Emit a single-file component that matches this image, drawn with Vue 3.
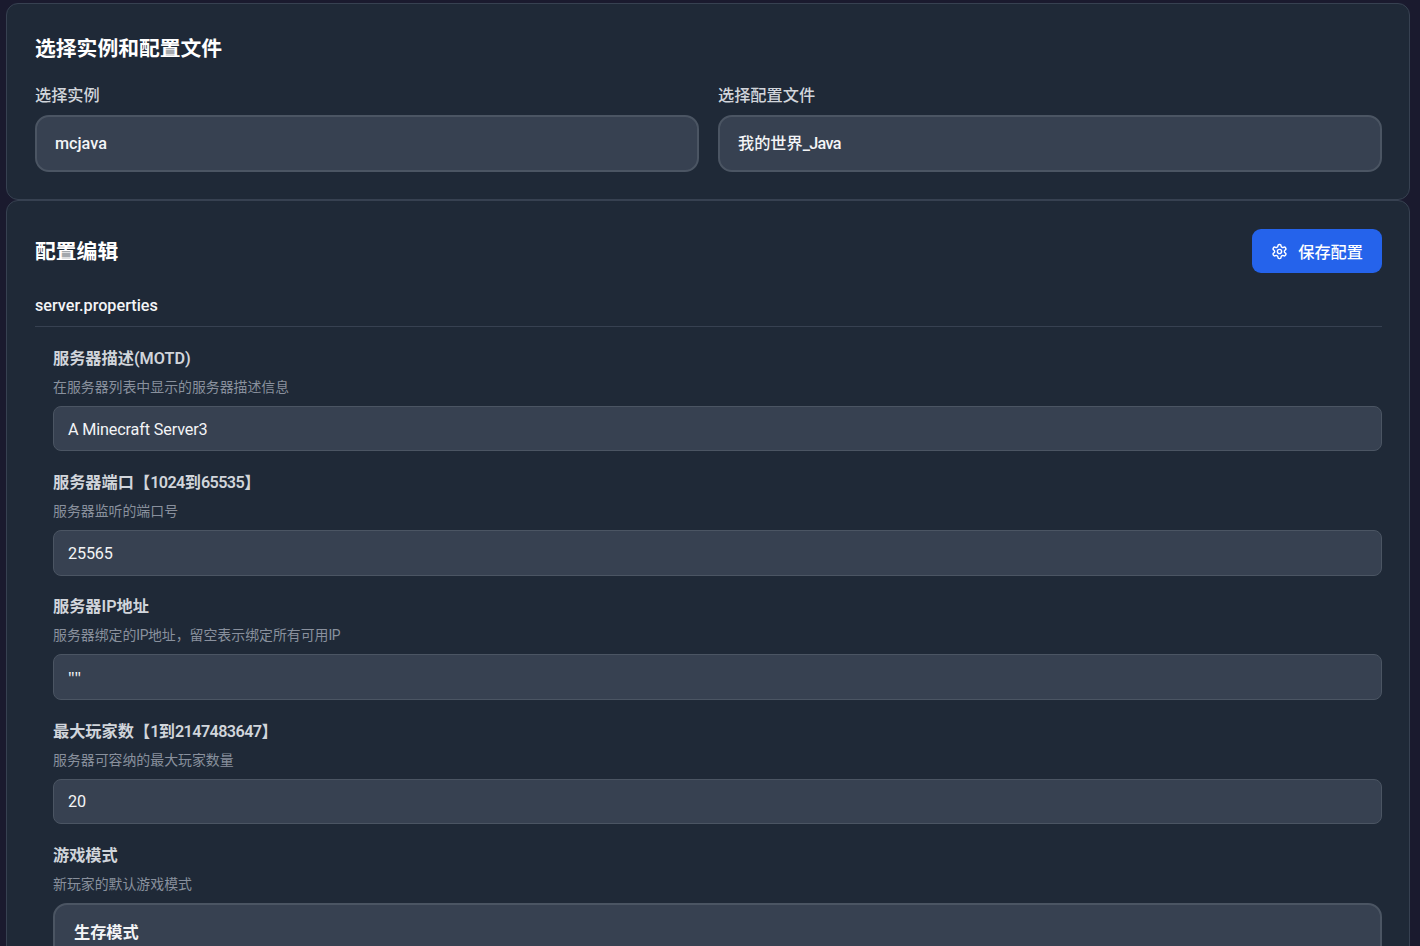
<script setup>
const fields = [
  { label: '服务器描述(MOTD)', hint: '在服务器列表中显示的服务器描述信息', value: 'A Minecraft Server3' },
  { label: '服务器端口【1024到65535】', hint: '服务器监听的端口号', value: '25565' },
  { label: '服务器IP地址', hint: '服务器绑定的IP地址，留空表示绑定所有可用IP', value: '""', quote: true },
  { label: '最大玩家数【1到2147483647】', hint: '服务器可容纳的最大玩家数量', value: '20' }
]
const split = (text, re) => text.split(re).map((t, i) => ({ t, lat: i % 2 === 1 }))
const labelParts = (text) => split(text, /([0-9]+)/)
const hintParts = (text) => split(text, /(IP)/)
</script>

<template>
  <div class="page">
    <section class="card first">
      <h2 class="title">选择实例和配置文件</h2>
      <div class="selects">
        <div class="sel-col">
          <div class="sel-label">选择实例</div>
          <div class="select"><span>mcjava</span></div>
        </div>
        <div class="sel-col">
          <div class="sel-label">选择配置文件</div>
          <div class="select"><span>我的世界<span class="java">_Java</span></span></div>
        </div>
      </div>
    </section>
    <section class="card second">
      <div class="head">
        <h2 class="title">配置编辑</h2>
        <button class="save">
          <svg width="17" height="17" viewBox="0 0 24 24" fill="none" stroke="currentColor" stroke-width="2" stroke-linecap="round" stroke-linejoin="round">
            <path d="M12.22 2h-.44a2 2 0 0 0-2 2v.18a2 2 0 0 1-1 1.73l-.43.25a2 2 0 0 1-2 0l-.15-.08a2 2 0 0 0-2.73.73l-.22.38a2 2 0 0 0 .73 2.73l.15.1a2 2 0 0 1 1 1.72v.51a2 2 0 0 1-1 1.74l-.15.09a2 2 0 0 0-.73 2.73l.22.38a2 2 0 0 0 2.73.73l.15-.08a2 2 0 0 1 2 0l.43.25a2 2 0 0 1 1 1.73V20a2 2 0 0 0 2 2h.44a2 2 0 0 0 2-2v-.18a2 2 0 0 1 1-1.73l.43-.25a2 2 0 0 1 2 0l.15.08a2 2 0 0 0 2.73-.73l.22-.39a2 2 0 0 0-.73-2.73l-.15-.08a2 2 0 0 1-1-1.74v-.5a2 2 0 0 1 1-1.74l.15-.09a2 2 0 0 0 .73-2.73l-.22-.38a2 2 0 0 0-2.73-.73l-.15.08a2 2 0 0 1-2 0l-.43-.25a2 2 0 0 1-1-1.73V4a2 2 0 0 0-2-2z" />
            <circle cx="12" cy="12" r="3" />
          </svg>
          <span>保存配置</span>
        </button>
      </div>
      <div class="file">server.properties</div>
      <div class="fields">
        <div v-for="f in fields" :key="f.label" class="field">
          <div class="label"><span v-for="(p, i) in labelParts(f.label)" :key="i" :class="{ num: p.lat }">{{ p.t }}</span></div>
          <div class="hint"><span v-for="(p, i) in hintParts(f.hint)" :key="i" :class="{ ip: p.lat }">{{ p.t }}</span></div>
          <div class="input" :class="{ quote: f.quote }">{{ f.value }}</div>
        </div>
        <div class="field">
          <div class="label">游戏模式</div>
          <div class="hint">新玩家的默认游戏模式</div>
          <div class="select mode"><span>生存模式</span></div>
        </div>
      </div>
    </section>
  </div>
</template>

<style>
html, body { margin: 0; background: #1a1a2e; overflow: hidden; }
</style>

<style scoped>
.page {
  height: 946px;
  overflow: hidden;
  box-sizing: border-box;
  padding: 3px 10px 0 6px;
  font-family: Roboto, "Noto Sans CJK SC", sans-serif;
  color: #f3f4f6;
}
.card {
  background: #1f2937;
  border: 1px solid #374151;
  border-radius: 12px;
  padding: 28px 27px 28px 28px;
  box-sizing: border-box;
}
.first { height: 197px; }
.title {
  margin: 0;
  padding-top: 1px;
  font-size: 20.8px;
  line-height: 32px;
  font-weight: 700;
  color: #fff;
}
.head .title { padding-top: 2px; }
.selects { display: flex; gap: 19px; margin-top: 19px; }
.sel-col { flex: 1; min-width: 0; }
.sel-label {
  font-size: 16.2px;
  line-height: 24px;
  font-weight: 500;
  color: #d1d5db;
  margin-bottom: 7px;
}
.select {
  height: 57px;
  box-sizing: border-box;
  display: flex;
  align-items: center;
  padding: 1px 18px 0;
  background: #374151;
  border: 2px solid #4b5563;
  border-radius: 14px;
  font-size: 16.2px;
  line-height: 24px;
  font-weight: 500;
  color: #f3f4f6;
}
.java { letter-spacing: -0.7px; }
.head { display: flex; justify-content: space-between; align-items: center; height: 44px; }
.save {
  display: flex;
  align-items: center;
  gap: 10px;
  height: 44px;
  padding: 0 19px;
  background: #2563eb;
  color: #fff;
  border: none;
  border-radius: 9px;
  font: inherit;
  font-size: 16.2px;
  font-weight: 500;
}
.file {
  margin-top: 17px;
  padding-bottom: 6px;
  border-bottom: 1px solid #374151;
  font-size: 16.2px;
  height: 30px;
  line-height: 32px;
  font-weight: 500;
  color: #f3f4f6;
}
.fields { padding: 15.75px 0 0 18px; display: flex; flex-direction: column; gap: 15.75px; }
.label {
  padding-top: 1px;
  font-size: 16.2px;
  line-height: 30px;
  font-weight: 600;
  color: #d1d5db;
}
.num { letter-spacing: -0.6px; }
.hint {
  font-size: 13.9px;
  line-height: 20px;
  color: #9ca3af;
  margin: 3px 0 9px;
  opacity: .85;
}
.ip { letter-spacing: -0.5px; }
.input {
  height: 45.5px;
  box-sizing: border-box;
  display: flex;
  align-items: center;
  padding: 1px 14px 0;
  background: #374151;
  border: 1px solid #4b5563;
  border-radius: 8px;
  font-size: 16.2px;
  letter-spacing: -0.15px;
  color: #f3f4f6;
}
.quote { font-family: "Noto Sans", sans-serif; }
.select.mode { font-weight: 600; padding: 3px 19px 0; }
</style>
